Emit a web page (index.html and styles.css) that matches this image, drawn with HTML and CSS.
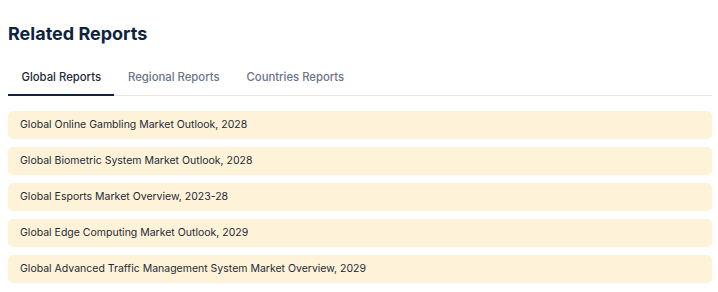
FILE: index.html
```html
<!DOCTYPE html>
<html lang="en">
<head>
<meta charset="utf-8">
<title>Related Reports</title>
<link rel="stylesheet" href="styles.css">
</head>
<body>
<section class="related">
  <h2 class="related-title">Related Reports</h2>
  <nav class="tabs">
    <a class="tab tab-active">Global Reports</a>
    <a class="tab">Regional Reports</a>
    <a class="tab">Countries Reports</a>
  </nav>
  <ul class="report-list">
    <li class="report-item">Global Online Gambling Market Outlook, 2028</li>
    <li class="report-item">Global Biometric System Market Outlook, 2028</li>
    <li class="report-item">Global Esports Market Overview, 2023-28</li>
    <li class="report-item">Global Edge Computing Market Outlook, 2029</li>
    <li class="report-item">Global Advanced Traffic Management System Market Overview, 2029</li>
  </ul>
</section>
</body>
</html>
```
FILE: styles.css
```css
* { box-sizing: border-box; }
html, body { margin: 0; padding: 0; background: #ffffff; }
body {
  font-family: Inter, "Noto Sans", sans-serif;
  padding: 0 6px 0 8px;
}
.related {
  display: flex;
  flex-direction: column;
}
.related-title {
  margin: 22px 0 0;
  font-size: 18px;
  line-height: 24px;
  font-weight: 700;
  color: #0e2340;
}
.tabs {
  display: flex;
  margin-top: 16px;
  border-bottom: 1px solid #e5e7eb;
}
.tab {
  padding: 0 13.5px;
  height: 34px;
  line-height: 30px;
  font-size: 11.3px;
  font-weight: 500;
  color: #6b7488;
  border-bottom: 2px solid transparent;
  margin-bottom: -1px;
  cursor: pointer;
}
.tab-active {
  color: #1f2937;
  border-bottom-color: #0e2340;
}
.report-list {
  list-style: none;
  margin: 15px 0 0;
  padding: 0;
  display: flex;
  flex-direction: column;
  gap: 8px;
}
.report-item {
  height: 28px;
  line-height: 28px;
  padding: 0 12px;
  background: #fef3d9;
  border-radius: 5px;
  font-size: 10.5px;
  color: #1f2937;
}
```
